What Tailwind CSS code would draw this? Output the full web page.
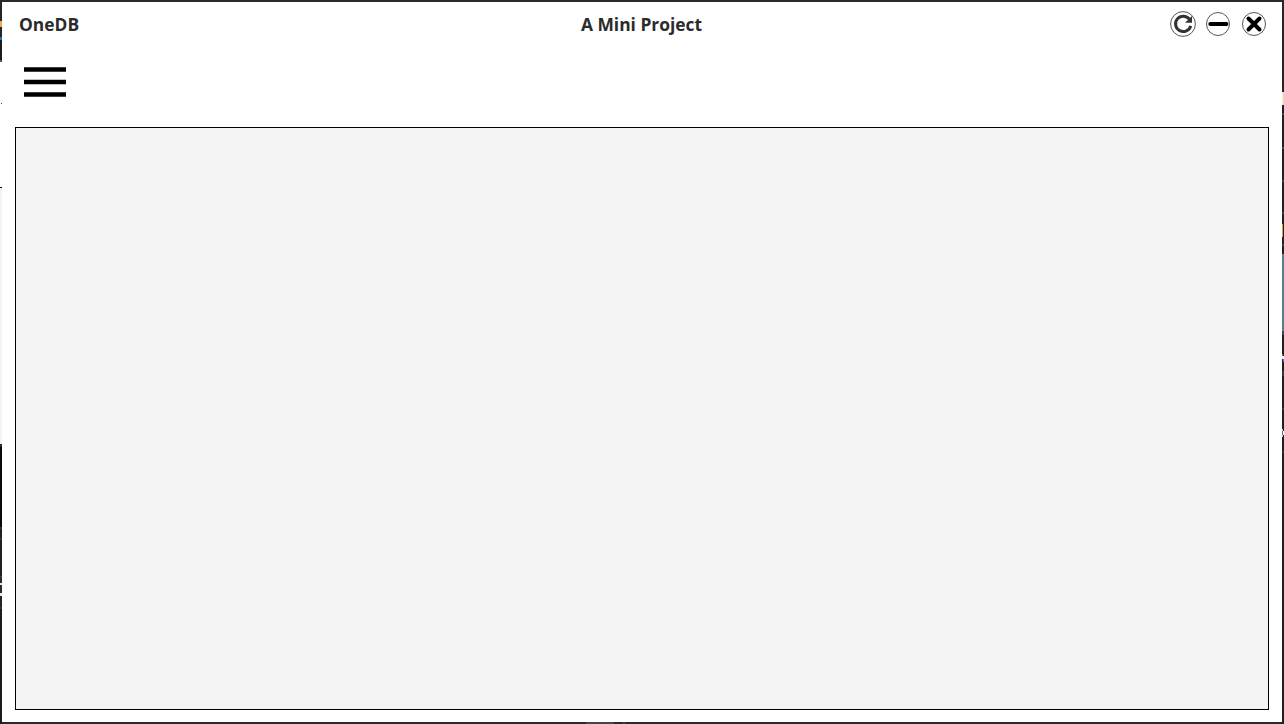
<!DOCTYPE html>
<html lang="en">
<head>
<meta charset="utf-8">
<title>OneDB</title>
<script src="https://cdn.jsdelivr.net/npm/@tailwindcss/browser@4"></script>
</head>
<body class="flex h-[724px] w-[1284px] overflow-hidden bg-[#222222] font-['Open_Sans','Noto_Sans',sans-serif]">
  <!-- desktop visible to the left of the window -->
  <div class="flex w-[2px] shrink-0 flex-col bg-[#1c1c1d]">
    <div class="h-[21px] bg-[#252526]"></div>
    <div class="h-[6px] bg-[#e9a95c]"></div>
    <div class="h-[10px] bg-[#252526]"></div>
    <div class="h-[3px] bg-[#0078d7]"></div>
    <div class="h-[20px]"></div>
    <div class="h-[2px] bg-[#555555]"></div>
    <div class="h-[41px] bg-white"></div>
    <div class="h-px border-l border-white bg-[#444444]"></div>
    <div class="h-[83px] bg-white"></div>
    <div class="h-px bg-black"></div>
    <div class="h-[256px] bg-[#f4f4f4]"></div>
    <div class="h-[3px] bg-[#29292e]"></div>
    <div class="h-[80px] bg-[#09090a]"></div>
    <div class="h-[2px] bg-[#33333a]"></div>
    <div class="h-[9px] bg-[#202024]"></div>
    <div class="h-[2px] bg-[#35353c]"></div>
    <div class="h-[36px] bg-[#202022]"></div>
    <div class="h-[2px] bg-[#35353c]"></div>
    <div class="h-[5px] bg-[#29292e]"></div>
    <div class="h-[2px] bg-[#e8e8ee]"></div>
    <div class="h-[8px] bg-[#29292e]"></div>
    <div class="h-[3px] bg-[#e8e8ee]"></div>
    <div class="h-[11px] bg-[#242428]"></div>
    <div class="h-[2px] bg-[#35353c]"></div>
  </div>

  <div class="flex w-[1280px] shrink-0 flex-col">
    <div class="h-[2px] shrink-0 bg-[#2b2a2b]"></div>
    <main class="flex h-[720px] shrink-0 flex-col bg-white">
      <header class="grid h-[44px] grid-cols-3 items-center pl-[17px] pr-[16px] text-[17.4px] leading-[24px] font-bold text-[#2b2b2b]">
        <span>OneDB</span>
        <h1 class="pr-[2px] text-center">A Mini Project</h1>
        <div class="flex items-center justify-end gap-[10px]">
          <button aria-label="Refresh">
            <svg class="block" width="26" height="26" viewBox="0 0 26 26" fill="none">
              <circle cx="13" cy="13" r="12.4" stroke="#444" stroke-width="0.9"/>
              <path d="M19.4 8.2A7.7 7.7 0 1 0 20.7 14.8" stroke="#333" stroke-width="3"/>
              <path d="M22 5v6.8h-7z" fill="#333"/>
            </svg>
          </button>
          <button aria-label="Minimize">
            <svg class="block" width="24" height="24" viewBox="0 0 24 24" fill="none">
              <circle cx="12" cy="12" r="11.5" stroke="#444" stroke-width="0.9"/>
              <path d="M4.3 12h16.2" stroke="#000" stroke-width="4" stroke-linecap="round"/>
            </svg>
          </button>
          <button aria-label="Close" class="ml-[2px]">
            <svg class="block" width="24" height="24" viewBox="0 0 24 24" fill="none">
              <circle cx="12" cy="12" r="11.5" stroke="#444" stroke-width="0.9"/>
              <path d="M6.5 6.5l11 11M17.5 6.5l-11 11" stroke="#000" stroke-width="4" stroke-linecap="round"/>
            </svg>
          </button>
        </div>
      </header>
      <nav class="flex h-[81px] items-start pl-[22px] pt-[21px]">
        <button aria-label="Menu">
          <svg class="block" width="42" height="30" viewBox="0 0 42 30" stroke="#000" stroke-width="4.3">
            <path d="M0 2.5h42M0 15h42M0 27.5h42"/>
          </svg>
        </button>
      </nav>
      <section class="mx-[13px] h-[583px] border border-black bg-[#f4f4f4]"></section>
    </main>
    <div class="flex h-[2px] shrink-0 bg-[#2b2a2b]"><div class="ml-[584px] w-[28px] bg-[#454449]"></div><div class="ml-[9px] w-[2px] bg-[#454449]"></div></div>
  </div>

  <!-- desktop visible to the right of the window -->
  <div class="flex w-[2px] shrink-0 flex-col bg-[#202021]">
    <div class="h-[92px] bg-[#272728]"></div>
    <div class="h-[13px] border-r border-[#f3d9a4] bg-[#efeaf0]"></div>
    <div class="h-[8px]"></div><div class="h-[2px] bg-[#444444]"></div>
    <div class="h-[32px]"></div><div class="h-[2px] bg-[#444444]"></div>
    <div class="h-[31px]"></div><div class="h-[2px] bg-[#444444]"></div>
    <div class="h-[30px]"></div><div class="h-[2px] bg-[#444444]"></div>
    <div class="h-[10px]"></div>
    <div class="mr-px h-[13px] bg-[#dca04f]"></div>
    <div class="h-[7px]"></div><div class="h-[2px] bg-[#444444]"></div>
    <div class="h-[8px]"></div>
    <div class="h-[77px] bg-[#557f91]"></div>
    <div class="h-[4px] bg-[#444447]"></div>
    <div class="h-[19px]"></div>
    <div class="mr-px h-[2px] bg-[#b3622a]"></div>
    <div class="h-[3px] bg-[#eef4ff]"></div>
    <div class="ml-px h-[3px] bg-[#3c7fd4]"></div>
    <div class="h-[9px]"></div>
    <div class="h-[5px] bg-[#38383a]"></div>
    <div class="h-[32px]"></div><div class="h-[2px] bg-[#38383a]"></div>
    <div class="h-[19px]"></div>
    <div class="mr-px h-[2px] bg-[#e5c79b]"></div>
    <div class="h-[4px] border-r border-white bg-[#2c80d8]"></div>
    <div class="mr-px h-[2px] bg-[#e5c79b]"></div>
    <div class="h-[14px]"></div><div class="h-[2px] bg-[#38383a]"></div>
  </div>
</body>
</html>
